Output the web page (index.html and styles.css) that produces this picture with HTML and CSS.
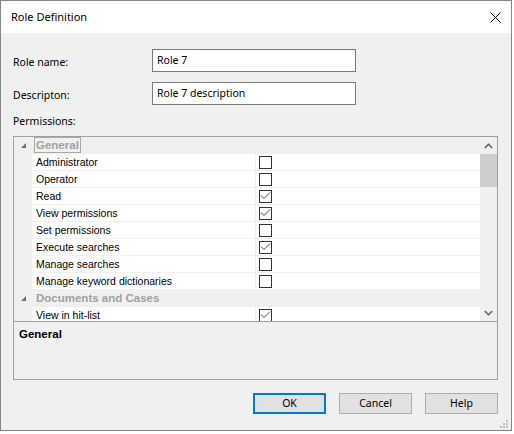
FILE: index.html
```html
<!DOCTYPE html>
<html>
<head>
<meta charset="utf-8">
<link rel="stylesheet" href="styles.css">
</head>
<body>
<div class="dialog">
  <div class="titlebar">
    <span class="title">Role Definition</span>
    <svg class="close" width="11" height="11" viewBox="0 0 11 11"><path d="M0.5 0.5 L10.5 10.5 M10.5 0.5 L0.5 10.5" stroke="#000" stroke-width="1" fill="none"/></svg>
  </div>
  <div class="content">
    <div class="form">
      <label class="lbl">Role name:</label>
      <input class="txt" type="text" value="Role 7">
      <label class="lbl">Descripton:</label>
      <input class="txt" type="text" value="Role 7 description">
    </div>
    <div class="perm-label">Permissions:</div>
    <div class="pgrid">
      <div class="gridview">
        <div class="rows">
          <div class="row cat">
            <div class="margin"><svg width="6" height="6" viewBox="0 0 6 6"><polygon points="5,0 5,5 0,5" fill="#6e6e6e"/></svg></div>
            <div class="catname"><span class="focus">General</span></div>
          </div>
          <div class="row"><div class="margin"></div><div class="name">Administrator</div><div class="value"><span class="cb"></span></div></div>
          <div class="row"><div class="margin"></div><div class="name">Operator</div><div class="value"><span class="cb"></span></div></div>
          <div class="row"><div class="margin"></div><div class="name">Read</div><div class="value"><span class="cb"><svg width="11" height="11" viewBox="0 0 11 11"><path d="M1 3.5 L4 6.5 L10 0.5" stroke="#444" stroke-width="1" fill="none"/></svg></span></div></div>
          <div class="row"><div class="margin"></div><div class="name">View permissions</div><div class="value"><span class="cb"><svg width="11" height="11" viewBox="0 0 11 11"><path d="M1 3.5 L4 6.5 L10 0.5" stroke="#444" stroke-width="1" fill="none"/></svg></span></div></div>
          <div class="row"><div class="margin"></div><div class="name">Set permissions</div><div class="value"><span class="cb"></span></div></div>
          <div class="row"><div class="margin"></div><div class="name">Execute searches</div><div class="value"><span class="cb"><svg width="11" height="11" viewBox="0 0 11 11"><path d="M1 3.5 L4 6.5 L10 0.5" stroke="#444" stroke-width="1" fill="none"/></svg></span></div></div>
          <div class="row"><div class="margin"></div><div class="name">Manage searches</div><div class="value"><span class="cb"></span></div></div>
          <div class="row"><div class="margin"></div><div class="name">Manage keyword dictionaries</div><div class="value"><span class="cb"></span></div></div>
          <div class="row cat">
            <div class="margin"><svg width="6" height="6" viewBox="0 0 6 6"><polygon points="5,0 5,5 0,5" fill="#6e6e6e"/></svg></div>
            <div class="catname"><span class="nofocus">Documents and Cases</span></div>
          </div>
          <div class="row"><div class="margin"></div><div class="name">View in hit-list</div><div class="value"><span class="cb"><svg width="11" height="11" viewBox="0 0 11 11"><path d="M1 3.5 L4 6.5 L10 0.5" stroke="#444" stroke-width="1" fill="none"/></svg></span></div></div>
        </div>
        <div class="scrollbar">
          <div class="arrow"><svg width="9" height="6" viewBox="0 0 9 6"><path d="M0.8 5 L4.5 1.3 L8.2 5" stroke="#606060" stroke-width="1.6" fill="none"/></svg></div>
          <div class="thumb"></div>
          <div class="track"></div>
          <div class="arrow"><svg width="9" height="6" viewBox="0 0 9 6"><path d="M0.8 1 L4.5 4.7 L8.2 1" stroke="#606060" stroke-width="1.6" fill="none"/></svg></div>
        </div>
      </div>
      <div class="help">General</div>
    </div>
    <div class="buttons">
      <button class="btn default">OK</button>
      <button class="btn">Cancel</button>
      <button class="btn">Help</button>
    </div>
  </div>
  <svg class="grip" width="8" height="8" viewBox="0 0 8 8">
    <rect x="6" y="0" width="2" height="2" fill="#bcbcbc"/>
    <rect x="3" y="3" width="2" height="2" fill="#bcbcbc"/>
    <rect x="6" y="3" width="2" height="2" fill="#bcbcbc"/>
    <rect x="0" y="6" width="2" height="2" fill="#bcbcbc"/>
    <rect x="3" y="6" width="2" height="2" fill="#bcbcbc"/>
    <rect x="6" y="6" width="2" height="2" fill="#bcbcbc"/>
  </svg>
</div>
</body>
</html>
```

FILE: styles.css
```css
* { box-sizing: border-box; }
html, body { margin: 0; padding: 0; background: #ffffff; }
body { font-family: "Noto Sans", "Open Sans", sans-serif; font-size: 10.5px; color: #000; }

.dialog {
  position: relative;
  width: 512px;
  height: 431px;
  border: 1px solid #858585;
  background: #f0f0f0;
  display: flex;
  flex-direction: column;
}

.titlebar {
  height: 32px;
  flex: none;
  background: #ffffff;
  display: flex;
  align-items: center;
  justify-content: space-between;
  padding: 0 10px 0 10px;
}
.title { font-size: 11px; line-height: 14px; }
.close { display: block; margin-top: 1px; }

.content {
  flex: 1;
  display: flex;
  flex-direction: column;
  padding: 16px 12px 0 12px;
}

.form {
  display: grid;
  grid-template-columns: 139px 204px;
  grid-auto-rows: 23px;
  row-gap: 10px;
  align-items: center;
}
.lbl { font-size: 10.5px; line-height: 14px; padding-top: 2px; }
.txt {
  width: 204px;
  height: 23px;
  margin: 0;
  border: 1px solid #7a7a7a;
  background: #fff;
  padding: 0 4px 2px 4px;
  font-family: "Noto Sans", "Open Sans", sans-serif;
  font-size: 10.5px;
  color: #000;
  outline: none;
}

.perm-label { margin-top: 10px; height: 13px; line-height: 13px; }

.pgrid {
  margin-top: 8px;
  width: 485px;
  height: 244px;
  border: 1px solid #a0a0a0;
  display: flex;
  flex-direction: column;
}
.gridview {
  height: 185px;
  flex: none;
  display: flex;
  border-bottom: 1px solid #a0a0a0;
  overflow: hidden;
}
.rows {
  flex: 1;
  overflow: hidden;
  font-family: "Liberation Sans", Arial, sans-serif;
  font-size: 10.5px;
  background: #fff;
}
.row {
  height: 17px;
  display: flex;
  border-bottom: 1px solid #f0f0f0;
  background: #fff;
}
.margin {
  width: 18px;
  flex: none;
  background: #f0f0f0;
  display: flex;
  align-items: center;
  justify-content: center;
  padding-left: 1px;
}
.margin svg { display: block; margin-top: 1px; }
.name {
  width: 223px;
  flex: none;
  padding-left: 4px;
  line-height: 16px;
  white-space: nowrap;
}
.value {
  flex: 1;
  border-left: 1px solid #f0f0f0;
  padding-left: 3px;
  display: flex;
  align-items: center;
}
.cb {
  width: 13px;
  height: 13px;
  border: 1px solid #333333;
  background: #fff;
  display: block;
}
.cb svg { display: block; margin: 1px 0 0 0; }

.row.cat { background: #f0f0f0; border-bottom-color: #f0f0f0; }
.catname {
  flex: 1;
  padding-left: 2px;
  display: flex;
  align-items: center;
  font-weight: bold;
  font-size: 11.5px;
  color: #a0a0a0;
}
.focus {
  border: 1px solid #a8a8a8;
  padding: 0 1px;
  line-height: 14px;
}
.nofocus { padding-left: 2px; line-height: 16px; }

.scrollbar {
  width: 17px;
  flex: none;
  background: #f0f0f0;
  display: flex;
  flex-direction: column;
}
.arrow {
  height: 17px;
  flex: none;
  display: flex;
  align-items: center;
  justify-content: center;
}
.arrow svg { display: block; }
.thumb { height: 33px; background: #cdcdcd; flex: none; }
.track { flex: 1; }

.help {
  flex: 1;
  padding: 6px 0 0 5px;
  font-family: "Liberation Sans", Arial, sans-serif;
  font-weight: bold;
  font-size: 11.5px;
  line-height: 13px;
}

.buttons {
  margin-top: 13px;
  display: flex;
  justify-content: flex-end;
  gap: 13px;
  padding-right: 1px;
}
.btn {
  width: 73px;
  height: 21px;
  margin: 0;
  padding: 0;
  background: #e1e1e1;
  border: 1px solid #adadad;
  font-family: "Noto Sans", "Open Sans", sans-serif;
  font-size: 10.5px;
  color: #000;
  line-height: 17px;
}
.btn.default { border: 2px solid #0078d7; }

.grip { position: absolute; right: 3px; bottom: 2px; display: block; }
```
